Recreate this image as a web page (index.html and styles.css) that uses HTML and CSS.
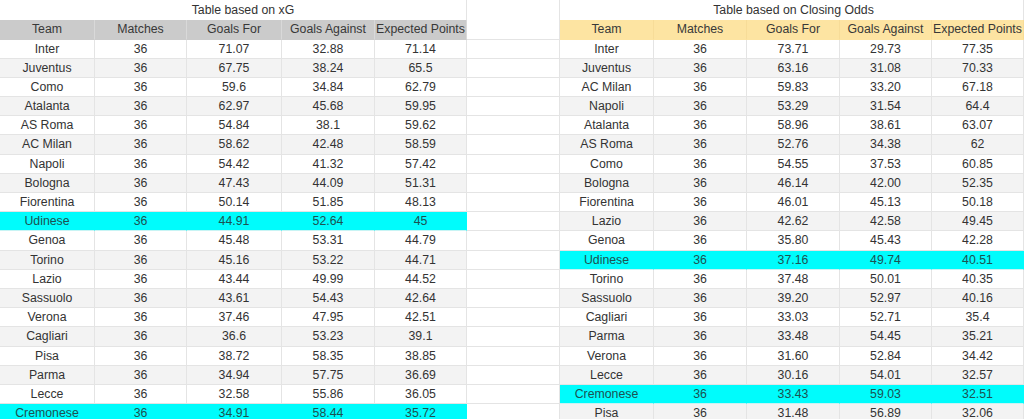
FILE: index.html
```html
<!DOCTYPE html>
<html>
<head>
<meta charset="utf-8">
<link rel="stylesheet" href="styles.css">
</head>
<body>
<div class="sheet">
  <div class="row title">
    <div class="grp l"><div class="ttl ttl-l">Table based on xG</div></div>
    <div class="gap"></div>
    <div class="grp r"><div class="ttl ttl-r">Table based on Closing Odds</div></div>
  </div>
  <div class="row head">
    <div class="grp l"><div>Team</div><div>Matches</div><div>Goals For</div><div>Goals Against</div><div>Expected Points</div></div>
    <div class="gap"></div>
    <div class="grp r"><div>Team</div><div>Matches</div><div>Goals For</div><div>Goals Against</div><div>Expected Points</div></div>
  </div>
  <div class="row">
    <div class="grp l"><div>Inter</div><div>36</div><div>71.07</div><div>32.88</div><div>71.14</div></div>
    <div class="gap"></div>
    <div class="grp r"><div>Inter</div><div>36</div><div>73.71</div><div>29.73</div><div>77.35</div></div>
  </div>
  <div class="row alt">
    <div class="grp l"><div>Juventus</div><div>36</div><div>67.75</div><div>38.24</div><div>65.5</div></div>
    <div class="gap"></div>
    <div class="grp r"><div>Juventus</div><div>36</div><div>63.16</div><div>31.08</div><div>70.33</div></div>
  </div>
  <div class="row">
    <div class="grp l"><div>Como</div><div>36</div><div>59.6</div><div>34.84</div><div>62.79</div></div>
    <div class="gap"></div>
    <div class="grp r"><div>AC Milan</div><div>36</div><div>59.83</div><div>33.20</div><div>67.18</div></div>
  </div>
  <div class="row alt">
    <div class="grp l"><div>Atalanta</div><div>36</div><div>62.97</div><div>45.68</div><div>59.95</div></div>
    <div class="gap"></div>
    <div class="grp r"><div>Napoli</div><div>36</div><div>53.29</div><div>31.54</div><div>64.4</div></div>
  </div>
  <div class="row">
    <div class="grp l"><div>AS Roma</div><div>36</div><div>54.84</div><div>38.1</div><div>59.62</div></div>
    <div class="gap"></div>
    <div class="grp r"><div>Atalanta</div><div>36</div><div>58.96</div><div>38.61</div><div>63.07</div></div>
  </div>
  <div class="row alt">
    <div class="grp l"><div>AC Milan</div><div>36</div><div>58.62</div><div>42.48</div><div>58.59</div></div>
    <div class="gap"></div>
    <div class="grp r"><div>AS Roma</div><div>36</div><div>52.76</div><div>34.38</div><div>62</div></div>
  </div>
  <div class="row">
    <div class="grp l"><div>Napoli</div><div>36</div><div>54.42</div><div>41.32</div><div>57.42</div></div>
    <div class="gap"></div>
    <div class="grp r"><div>Como</div><div>36</div><div>54.55</div><div>37.53</div><div>60.85</div></div>
  </div>
  <div class="row alt">
    <div class="grp l"><div>Bologna</div><div>36</div><div>47.43</div><div>44.09</div><div>51.31</div></div>
    <div class="gap"></div>
    <div class="grp r"><div>Bologna</div><div>36</div><div>46.14</div><div>42.00</div><div>52.35</div></div>
  </div>
  <div class="row">
    <div class="grp l"><div>Fiorentina</div><div>36</div><div>50.14</div><div>51.85</div><div>48.13</div></div>
    <div class="gap"></div>
    <div class="grp r"><div>Fiorentina</div><div>36</div><div>46.01</div><div>45.13</div><div>50.18</div></div>
  </div>
  <div class="row alt">
    <div class="grp l hl"><div>Udinese</div><div>36</div><div>44.91</div><div>52.64</div><div>45</div></div>
    <div class="gap"></div>
    <div class="grp r"><div>Lazio</div><div>36</div><div>42.62</div><div>42.58</div><div>49.45</div></div>
  </div>
  <div class="row">
    <div class="grp l"><div>Genoa</div><div>36</div><div>45.48</div><div>53.31</div><div>44.79</div></div>
    <div class="gap"></div>
    <div class="grp r"><div>Genoa</div><div>36</div><div>35.80</div><div>45.43</div><div>42.28</div></div>
  </div>
  <div class="row alt">
    <div class="grp l"><div>Torino</div><div>36</div><div>45.16</div><div>53.22</div><div>44.71</div></div>
    <div class="gap"></div>
    <div class="grp r hl"><div>Udinese</div><div>36</div><div>37.16</div><div>49.74</div><div>40.51</div></div>
  </div>
  <div class="row">
    <div class="grp l"><div>Lazio</div><div>36</div><div>43.44</div><div>49.99</div><div>44.52</div></div>
    <div class="gap"></div>
    <div class="grp r"><div>Torino</div><div>36</div><div>37.48</div><div>50.01</div><div>40.35</div></div>
  </div>
  <div class="row alt">
    <div class="grp l"><div>Sassuolo</div><div>36</div><div>43.61</div><div>54.43</div><div>42.64</div></div>
    <div class="gap"></div>
    <div class="grp r"><div>Sassuolo</div><div>36</div><div>39.20</div><div>52.97</div><div>40.16</div></div>
  </div>
  <div class="row">
    <div class="grp l"><div>Verona</div><div>36</div><div>37.46</div><div>47.95</div><div>42.51</div></div>
    <div class="gap"></div>
    <div class="grp r"><div>Cagliari</div><div>36</div><div>33.03</div><div>52.71</div><div>35.4</div></div>
  </div>
  <div class="row alt">
    <div class="grp l"><div>Cagliari</div><div>36</div><div>36.6</div><div>53.23</div><div>39.1</div></div>
    <div class="gap"></div>
    <div class="grp r"><div>Parma</div><div>36</div><div>33.48</div><div>54.45</div><div>35.21</div></div>
  </div>
  <div class="row">
    <div class="grp l"><div>Pisa</div><div>36</div><div>38.72</div><div>58.35</div><div>38.85</div></div>
    <div class="gap"></div>
    <div class="grp r"><div>Verona</div><div>36</div><div>31.60</div><div>52.84</div><div>34.42</div></div>
  </div>
  <div class="row alt">
    <div class="grp l"><div>Parma</div><div>36</div><div>34.94</div><div>57.75</div><div>36.69</div></div>
    <div class="gap"></div>
    <div class="grp r"><div>Lecce</div><div>36</div><div>30.16</div><div>54.01</div><div>32.57</div></div>
  </div>
  <div class="row">
    <div class="grp l"><div>Lecce</div><div>36</div><div>32.58</div><div>55.86</div><div>36.05</div></div>
    <div class="gap"></div>
    <div class="grp r hl"><div>Cremonese</div><div>36</div><div>33.43</div><div>59.03</div><div>32.51</div></div>
  </div>
  <div class="row alt">
    <div class="grp l hl"><div>Cremonese</div><div>36</div><div>34.91</div><div>58.44</div><div>35.72</div></div>
    <div class="gap"></div>
    <div class="grp r"><div>Pisa</div><div>36</div><div>31.48</div><div>56.89</div><div>32.06</div></div>
  </div>
</div>
</body>
</html>
```

FILE: styles.css
```css
html, body {
  margin: 0;
  padding: 0;
  background: #ffffff;
  overflow: hidden;
}

.sheet {
  width: 1024px;
  font-family: "Liberation Sans", Arial, sans-serif;
  font-size: 12.3px;
  color: #333333;
}

.row {
  display: flex;
  height: 19.2px;
}

.grp {
  display: grid;
  height: 100%;
}

.grp.l {
  width: 467px;
  grid-template-columns: 95px 92px 95px 93px 92px;
}

.grp.r {
  width: 464px;
  grid-template-columns: 94px 93px 93px 92px 92px;
}

.grp > div {
  box-sizing: border-box;
  border-right: 1px solid #e4e4e4;
  border-bottom: 1px solid #e4e4e4;
  text-align: center;
  white-space: nowrap;
  overflow: hidden;
  line-height: 18px;
}

.gap {
  width: 93px;
  box-sizing: border-box;
  border-right: 1px solid #e4e4e4;
  border-bottom: 1px solid #e4e4e4;
  background: #ffffff;
}

.row.alt .grp > div {
  background: #f3f3f3;
}

.grp.hl > div,
.row.alt .grp.hl > div {
  background: #00fcfc;
  color: #1c5252;
  border-right-color: #00fcfc;
  border-bottom-color: #c8f4f4;
}

/* title row */
.row.title {
  height: 20px;
}

.row.title .grp {
  grid-template-columns: 1fr;
}

.row.title .ttl {
  line-height: 20px;
  border-bottom: none;
  background: #ffffff;
}

.ttl-l {
  padding-left: 20px;
}

.ttl-r {
  padding-left: 4px;
}

.row.title .gap {
  border-bottom: none;
}

/* header row */
.row.head {
  height: 19.5px;
}

.row.head .grp > div {
  line-height: 19px;
  color: #383838;
}

.row.head .grp.l > div {
  background: #cbcbcb;
  border-right-color: #d9d9d9;
  border-bottom-color: #cbcbcb;
}

.row.head .grp.r > div {
  background: #fde4a2;
  border-right-color: #f7dc98;
  border-bottom-color: #fde4a2;
}
```
